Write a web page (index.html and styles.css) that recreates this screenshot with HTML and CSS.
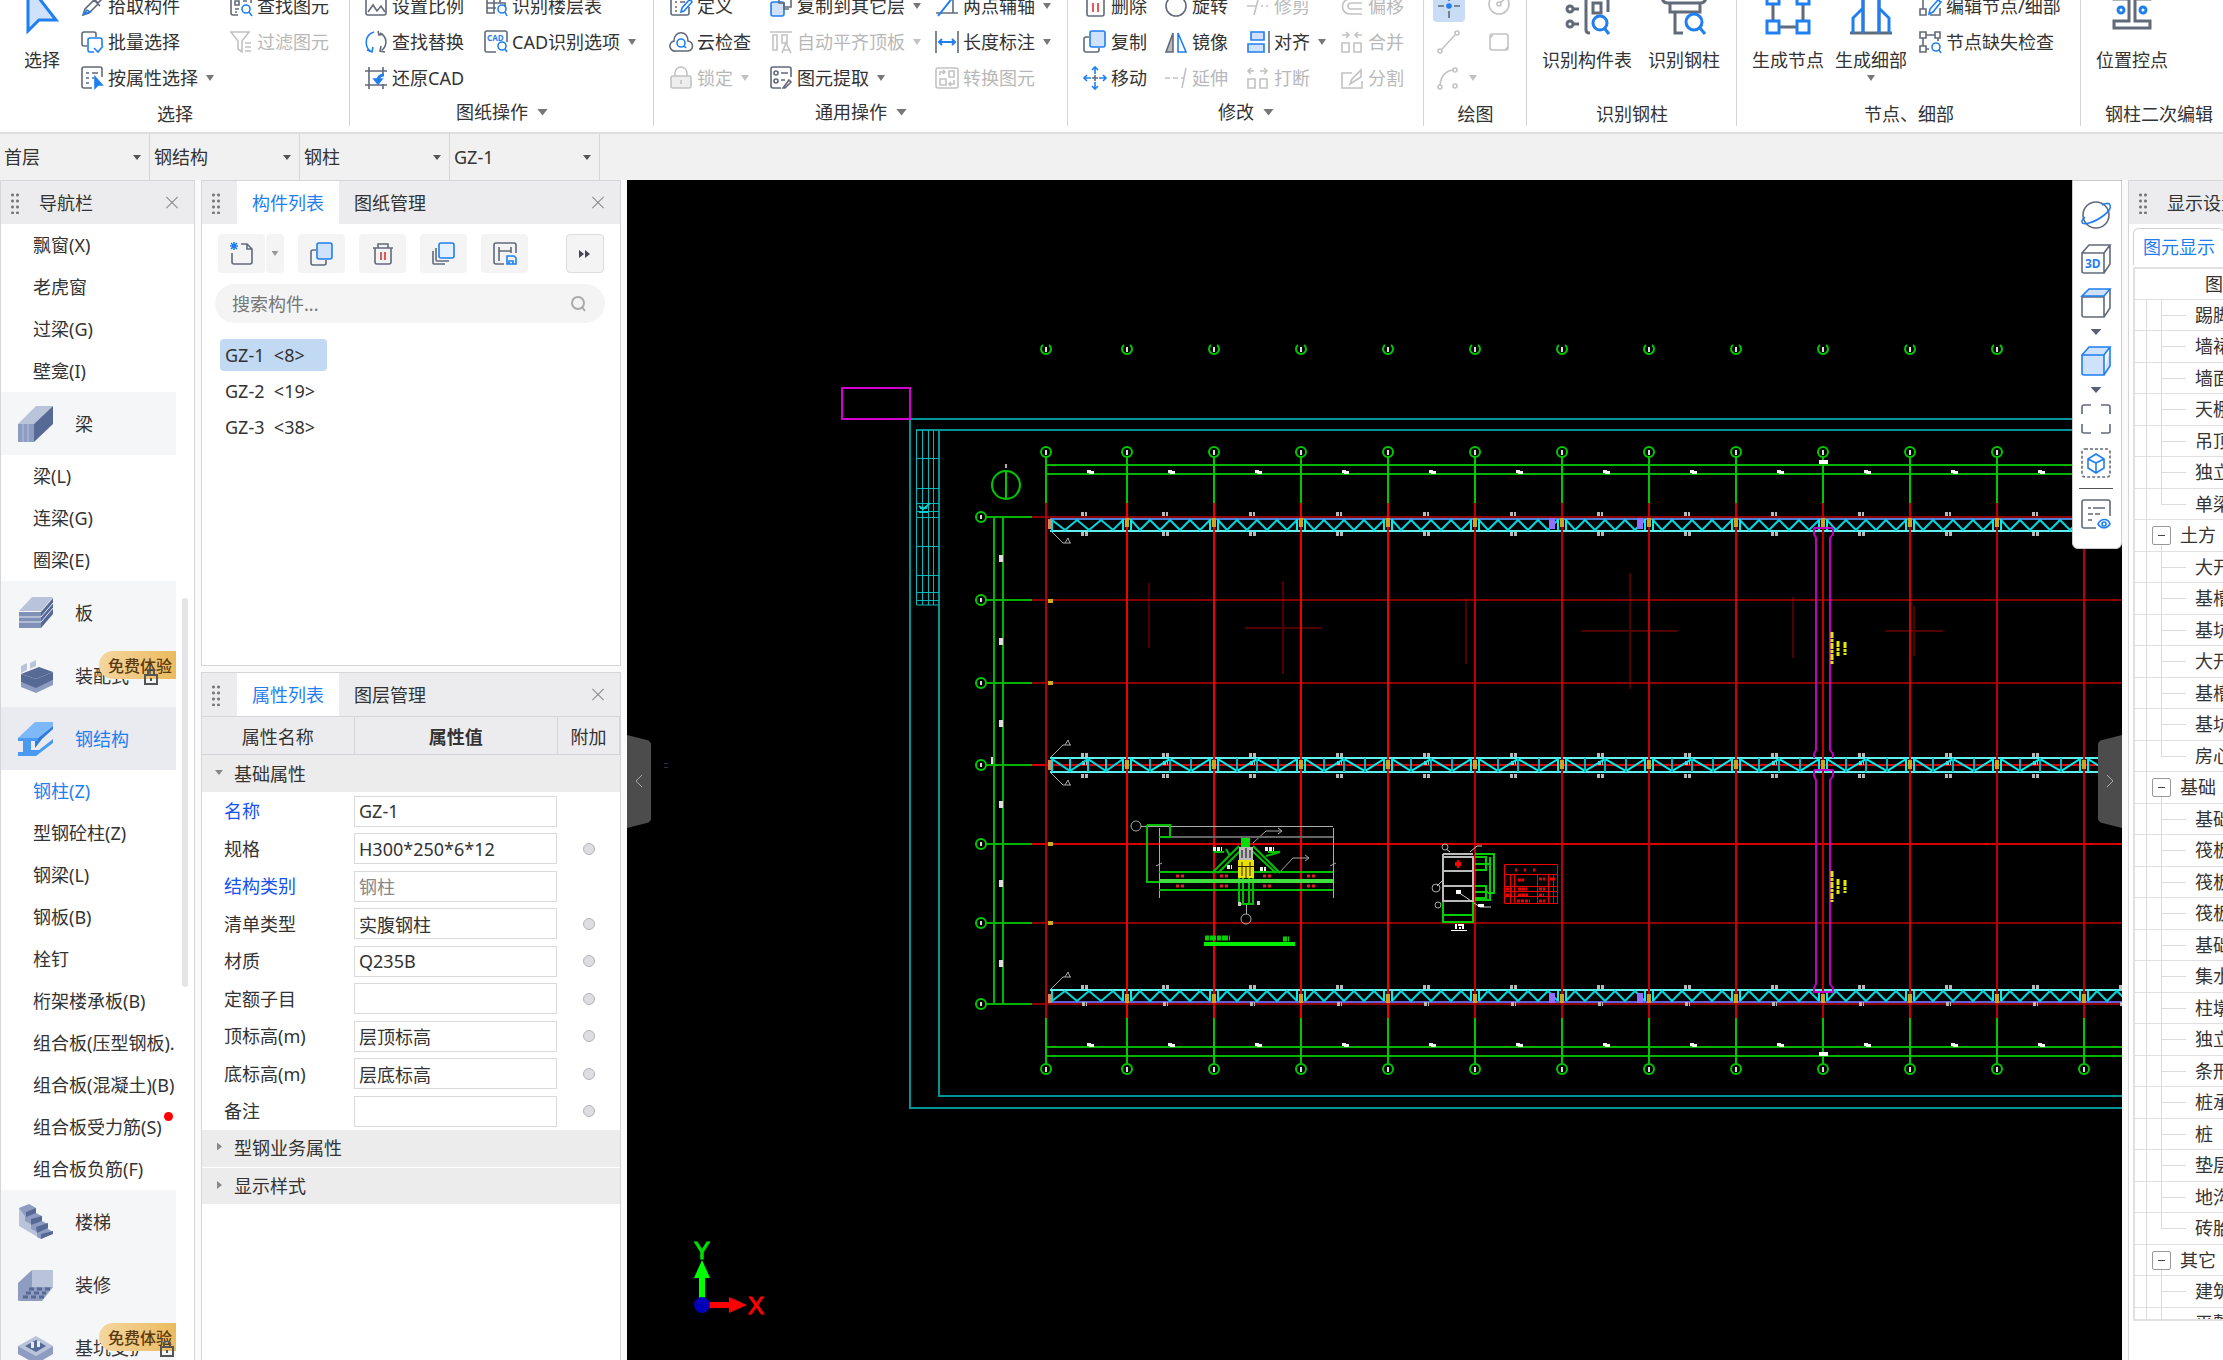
FILE: index.html
```html
<!DOCTYPE html>
<html lang="zh-CN">
<head>
<meta charset="utf-8">
<title>钢柱建模</title>
<link rel="stylesheet" href="styles.css">
</head>
<body>
<header class="ribbon">
  <section class="group group-select">
    <div class="tools">
      <button class="big"><svg class="ic big-ic" viewBox="0 0 44 44"><path class="b bf" stroke-width="3" d="M8 -6V41L19 30H36Z"/></svg><span>选择</span></button>
      <div class="col">
        <button class="cmd"><svg class="ic" viewBox="0 0 24 24"><path d="M3 21l2-6 9-9 4 4-9 9zM12 4l8 8M15 6l4-4 3 3-4 4z"/><path class="b" d="M4 20l3-4 3 2z"/></svg>拾取构件</button>
        <button class="cmd"><svg class="ic" viewBox="0 0 24 24"><path d="M7 16H4a2 2 0 0 1-2-2V4a2 2 0 0 1 2-2h10a2 2 0 0 1 2 2v3"/><path class="b" d="M14 22h-4a2 2 0 0 1-2-2v-10a2 2 0 0 1 2-2h10a2 2 0 0 1 2 2v6M14 18l4 4 5-6"/></svg>批量选择</button>
        <button class="cmd"><svg class="ic" viewBox="0 0 24 24"><path d="M12 22H4a2 2 0 0 1-2-2V3a2 2 0 0 1 2-2h16a2 2 0 0 1 2 2v8M6 7h3M12 7h6M6 12h3M12 12h2M6 17h3"/><path class="b solid" d="M15 11v11l3-3h4z"/></svg>按属性选择<i class="caret"></i></button>
      </div>
      <div class="col">
        <button class="cmd"><svg class="ic" viewBox="0 0 24 24"><path d="M9 21H4a2 2 0 0 1-2-2V3h20v6M6 7h4v4H6zM14 7h4M6 15h4M6 18h2"/><circle class="b" cx="17" cy="15" r="4"/><path class="b" d="M20 18l3 4"/></svg>查找图元</button>
        <button class="cmd" disabled><svg class="ic" viewBox="0 0 24 24"><path d="M2 2h18l-7 9v11l-4-3v-8zM16 13h6M16 17h6M16 21h6"/></svg>过滤图元</button>
      </div>
    </div>
    <h2>选择</h2>
  </section>
  <section class="group group-sheet">
    <div class="tools">
      <div class="col">
        <button class="cmd"><svg class="ic" viewBox="0 0 24 24"><rect x="2" y="2" width="20" height="19" rx="2"/><path d="M4 18l5-7 4 6 4-5 4 6"/></svg>设置比例</button>
        <button class="cmd"><svg class="ic" viewBox="0 0 24 24"><path class="b" d="M10 2C0 5 0 18 8 22M3 20l5 2 1-5"/><path d="M16 3c8 4 7 13 2 17M21 22l-5-1 1-5M14 1l1 4 4-1"/></svg>查找替换</button>
        <button class="cmd"><svg class="ic" viewBox="0 0 24 24"><path d="M5 1v22M19 1v8M1 5h22M1 19h22M19 18v5"/><path class="b" stroke-width="3" d="M20 9c-4 0-6 2-6 6"/><path class="b solid" d="M10 13h8l-4 5z"/></svg>还原CAD</button>
      </div>
      <div class="col">
        <button class="cmd"><svg class="ic" viewBox="0 0 24 24"><path d="M11 19H3V9h18v4M3 14h9M10 2v17M16 2v7M3 2v7"/><circle class="b" cx="18" cy="15" r="4"/><path class="b" d="M21 18l2 4"/></svg>识别楼层表</button>
        <button class="cmd"><svg class="ic" viewBox="0 0 24 24"><path d="M12 22H3a2 2 0 0 1-2-2V3a2 2 0 0 1 2-2h18a2 2 0 0 1 2 2v9"/><text class="cad" x="3" y="11">CAD</text><circle class="b" cx="18" cy="16" r="4"/><path class="b" d="M21 19l2 3"/></svg>CAD识别选项<i class="caret"></i></button>
      </div>
    </div>
    <h2>图纸操作<i class="caret"></i></h2>
  </section>
  <section class="group group-common">
    <div class="tools">
      <div class="col">
        <button class="cmd"><svg class="ic" viewBox="0 0 24 24"><path d="M20 13v6a2 2 0 0 1-2 2H4a2 2 0 0 1-2-2V4M6 8h2M11 8h5M6 13h2M6 17h2"/><path class="b" d="M12 18l1-4 8-9 2 3-8 9z"/></svg>定义</button>
        <button class="cmd"><svg class="ic" viewBox="0 0 24 24"><path d="M7 21a5 5 0 0 1-2-10c0-11 14-11 14 0a5 5 0 0 1-1 10z"/><circle class="b" cx="12" cy="13" r="4"/><path class="b" d="M15 16l2 2"/></svg>云检查</button>
        <button class="cmd" disabled><svg class="ic" viewBox="0 0 24 24"><rect x="2" y="10" width="20" height="12" rx="2" fill="#eee"/><path d="M6 10V7a6 6 0 0 1 12 0v3M12 14v4"/></svg>锁定<i class="caret"></i></button>
      </div>
      <div class="col">
        <button class="cmd"><svg class="ic" viewBox="0 0 24 24"><path d="M11 3V2h11v11h-6"/><rect class="b bf" x="2" y="8" width="13" height="14" rx="2"/><path d="M10 2v7h5v6h5"/></svg>复制到其它层<i class="caret"></i></button>
        <button class="cmd" disabled><svg class="ic" viewBox="0 0 24 24"><path d="M1 2h22M4 5h4v15H4zM13 5h5v8h-5zM13 23l4-10 5 10M14 20h6"/></svg>自动平齐顶板<i class="caret"></i></button>
        <button class="cmd"><svg class="ic" viewBox="0 0 24 24"><path d="M12 22H4a2 2 0 0 1-2-2V3a2 2 0 0 1 2-2h16a2 2 0 0 1 2 2v8M12 7h7M12 14h4M14 22l6-8 2 2-6 6z"/><circle cx="7" cy="7" r="2"/><circle cx="7" cy="15" r="2"/></svg>图元提取<i class="caret"></i></button>
      </div>
      <div class="col">
        <button class="cmd"><svg class="ic" viewBox="0 0 24 24"><path d="M1 19h22M18 1v18M5 1h17"/><path class="b" stroke-width="2" d="M3 22L19 2"/></svg>两点辅轴<i class="caret"></i></button>
        <button class="cmd"><svg class="ic" viewBox="0 0 24 24"><path d="M1 1v22M23 1v22"/><path class="b" stroke-width="2" d="M4 12h16M7 9l-3 3 3 3M17 9l3 3-3 3"/></svg>长度标注<i class="caret"></i></button>
        <button class="cmd" disabled><svg class="ic" viewBox="0 0 24 24"><rect x="1" y="2" width="22" height="20" rx="2"/><path d="M5 13h6v6H5zM14 5h5v6h-5zM5 9V6h5M8 4l2 2-2 2M19 14v4h-5M16 16l-2 2 2 2"/></svg>转换图元</button>
      </div>
    </div>
    <h2>通用操作<i class="caret"></i></h2>
  </section>
  <section class="group group-modify">
    <div class="tools">
      <div class="col">
        <button class="cmd"><svg class="ic" viewBox="0 0 24 24"><path d="M4 3v17a2 2 0 0 0 2 2h13a2 2 0 0 0 2-2V3"/><path class="r" d="M10 9v9M15 9v9"/></svg>删除</button>
        <button class="cmd"><svg class="ic" viewBox="0 0 24 24"><path d="M6 7H3a2 2 0 0 0-2 2v11a2 2 0 0 0 2 2h11a2 2 0 0 0 2-2v-2"/><rect class="b bf" x="7" y="1" width="15" height="16" rx="2"/></svg>复制</button>
        <button class="cmd"><svg class="ic" viewBox="0 0 24 24"><path class="b" d="M12 8V2M9 4l3-3 3 3M12 16v6M9 20l3 3 3-3M8 12H2M4 9l-3 3 3 3M16 12h6M20 9l3 3-3 3"/><path d="M12 9v6M9 12h6"/></svg>移动</button>
      </div>
      <div class="col">
        <button class="cmd"><svg class="ic" viewBox="0 0 24 24"><circle cx="12" cy="12" r="10"/></svg>旋转</button>
        <button class="cmd"><svg class="ic" viewBox="0 0 24 24"><path fill="#bbb" d="M2 22L9 3v19z"/><path class="b" d="M14 3v19h8z"/></svg>镜像</button>
        <button class="cmd" disabled><svg class="ic" viewBox="0 0 24 24"><path d="M1 12h5M9 12h5M22 2l-4 20M17 12h3"/></svg>延伸</button>
      </div>
      <div class="col">
        <button class="cmd" disabled><svg class="ic" viewBox="0 0 24 24"><path d="M1 12h9M13 2L8 21M15 12h2M20 12h2"/></svg>修剪</button>
        <button class="cmd"><svg class="ic" viewBox="0 0 24 24"><path class="b bf" d="M5 2h13v8H5zM2 14h16v8H2z"/><path d="M23 1v22"/></svg>对齐<i class="caret"></i></button>
        <button class="cmd" disabled><svg class="ic" viewBox="0 0 24 24"><path d="M2 13h7v9H2zM14 13h7v9h-7zM2 5h6M5 2L2 5l3 3M14 5h7M18 2l3 3-3 3"/></svg>打断</button>
      </div>
      <div class="col">
        <button class="cmd" disabled><svg class="ic" viewBox="0 0 24 24"><path d="M22 20H10C0 20 0 5 10 5h12M22 15H11c-4 0-4-6 0-6h11"/></svg>偏移</button>
        <button class="cmd" disabled><svg class="ic" viewBox="0 0 24 24"><path d="M2 13h7v9H2zM14 13h7v9h-7zM2 5h6M6 2l3 3-3 3M22 5h-7M18 2l-3 3 3 3"/></svg>合并</button>
        <button class="cmd" disabled><svg class="ic" viewBox="0 0 24 24"><path d="M12 7H2v15h20v-7M10 18l2-5 9-9v7z"/></svg>分割</button>
      </div>
    </div>
    <h2>修改<i class="caret"></i></h2>
  </section>
  <section class="group group-draw">
    <div class="tools">
      <div class="col">
        <button class="cmd" aria-label="点"><svg class="ic picked" viewBox="0 0 32 32"><path d="M5 16h6M21 16h6M16 5v6M16 21v7"/><circle class="b solid" cx="16" cy="16" r="2"/></svg></button>
        <button class="cmd inset" disabled aria-label="直线"><svg class="ic" viewBox="0 0 24 24"><circle cx="3" cy="21" r="2"/><circle cx="20" cy="3" r="2"/><path d="M5 19L18 5"/></svg></button>
        <button class="cmd inset" disabled aria-label="弧"><svg class="ic" viewBox="0 0 24 24"><circle cx="3" cy="21" r="2"/><circle cx="18" cy="20" r="2"/><circle cx="18" cy="4" r="2"/><path d="M3 19C4 10 8 5 16 4"/></svg><i class="caret"></i></button>
      </div>
      <div class="col">
        <button class="cmd" disabled aria-label="圆"><svg class="ic" viewBox="0 0 24 24"><circle cx="12" cy="10" r="10"/><circle cx="12" cy="10" r="2"/><path d="M13 9l6-5"/></svg></button>
        <button class="cmd" disabled aria-label="矩形"><svg class="ic" viewBox="0 0 24 24"><rect x="3" y="4" width="18" height="16" rx="2"/><path d="M3 8l3-3M18 20l3-3"/></svg></button>
      </div>
    </div>
    <h2>绘图</h2>
  </section>
  <section class="group group-detect">
    <div class="tools">
      <button class="big"><svg class="ic big-ic thick" viewBox="0 0 44 44"><circle cx="5" cy="19" r="3"/><circle cx="5" cy="34" r="3"/><path d="M8 19h6M8 34h6M21 -2v42q0 3 4 3M28 13h8v10h-8zM28 -2v12M43 -2v24"/><circle class="b" cx="35" cy="33" r="7"/><path class="b" d="M40 39l4 5"/></svg><span>识别构件表</span></button>
      <button class="big"><svg class="ic big-ic thick" viewBox="0 0 44 44"><path d="M0 8q1 5 6 5h32q5 0 6-5M8 13v9h30v-9M13 22v21h8M26 22h5"/><circle class="b" cx="32" cy="32" r="8"/><path class="b" d="M38 38l5 6"/></svg><span>识别钢柱</span></button>
    </div>
    <h2>识别钢柱</h2>
  </section>
  <section class="group group-node">
    <div class="tools">
      <button class="big"><svg class="ic big-ic thick" viewBox="0 0 44 44"><path d="M7 14v17M37 14v17M13 37h18"/><path class="b" d="M1 2h12v12H1zM31 2h12v12H31zM1 31h12v12H1zM31 31h12v12H31z"/></svg><span>生成节点</span></button>
      <button class="big"><svg class="ic big-ic thick" viewBox="0 0 44 44"><path d="M14 -2v44M30 -2v44M1 43h42"/><path class="b" d="M4 43V28l10-10v25M40 43V28L30 18v25M14 10v8M30 10v8"/></svg><span>生成细部</span><i class="caret"></i></button>
      <div class="col">
        <button class="cmd"><svg class="ic" viewBox="0 0 24 24"><path d="M5 2v13M2 15h6v6H2zM12 21h10v-7"/><path class="b" d="M11 20l1-5 8-9 3 2-8 10z"/></svg>编辑节点/细部</button>
        <button class="cmd"><svg class="ic" viewBox="0 0 24 24"><path d="M2 2h6v6H2zM17 2h5v6h-5zM2 16h6v6H2zM8 5h9M5 8v8M8 19h3M20 8v3"/><circle class="b" cx="18" cy="17" r="4"/><path class="b" d="M21 20l2 3"/></svg>节点缺失检查</button>
      </div>
    </div>
    <h2>节点、细部</h2>
  </section>
  <section class="group group-edit">
    <div class="tools">
      <button class="big"><svg class="ic big-ic thick" viewBox="0 0 44 44"><path d="M4 0v9h15v22H4v7h36v-7H25V9h15V0"/><circle class="b" cx="11" cy="20" r="3"/><circle class="b" cx="33" cy="20" r="3"/></svg><span>位置控点</span></button>
    </div>
    <h2>钢柱二次编辑</h2>
  </section>
</header>

<nav class="pickers">
  <label class="picker"><select aria-label="楼层"><option>首层</option></select></label>
  <label class="picker"><select aria-label="专业"><option>钢结构</option></select></label>
  <label class="picker"><select aria-label="构件类型"><option>钢柱</option></select></label>
  <label class="picker"><select aria-label="构件"><option>GZ-1</option></select></label>
</nav>

<main class="work">
  <aside class="panel nav-panel">
    <div class="panel-head"><i class="grip"></i><h3>导航栏</h3><button class="close" aria-label="关闭导航栏"></button></div>
    <div class="nav-body">
      <ul class="nav-list">
        <li><a href="#">飘窗(X)</a></li>
        <li><a href="#">老虎窗</a></li>
        <li><a href="#">过梁(G)</a></li>
        <li><a href="#">壁龛(I)</a></li>
        <li class="cat"><a href="#"><svg viewBox="0 0 36 36"><path fill="#b9c3da" d="M0 18L18 0h17L16 18z"/><path fill="#8d9cc0" d="M0 18h16v18H0z"/><path fill="#566a95" d="M16 18L35 0v18L16 36z"/><path stroke="#b9c3da" d="M5 18v18M10 18v18"/></svg>梁</a></li>
        <li><a href="#">梁(L)</a></li>
        <li><a href="#">连梁(G)</a></li>
        <li><a href="#">圈梁(E)</a></li>
        <li class="cat"><a href="#"><svg viewBox="0 0 36 36"><path fill="#b9c3da" d="M1 16L14 2h21L23 16z"/><path fill="#8091b8" d="M1 17h22v16H1z"/><path fill="#566a95" d="M23 17L35 3v16L23 33z"/><path fill="none" stroke="#e4e9f3" d="M1 22h22L35 8M1 27h22L35 13"/></svg>板</a></li>
        <li class="cat"><a href="#"><svg viewBox="0 0 36 36"><path fill="#566a95" d="M3 16l15 5 17-7-14-5z"/><path fill="#8d9cc0" d="M3 24v5l15 6 17-8v-5l-17 7z"/><path fill="#566a95" d="M3 16v8l15 6 17-8v-8l-17 7z"/><path fill="#b9c3da" d="M3 8l6-3v7l-6 3zM12 5l6-3v6l-6 3z"/></svg>装配式</a><svg class="lock" viewBox="0 0 14 16"><path d="M1 6h12v9H1zM4 6V3a3 3 0 0 1 6 0v3M7 9v3"/></svg><em class="trial">免费体验</em></li>
        <li class="cat current"><a href="#"><svg viewBox="0 0 36 36"><path fill="#7db8f8" d="M0 17L17 1h18v4L20 17z"/><path fill="#2f7be0" d="M20 17L35 5v3L24 18l-7 9v-7z"/><path fill="#4a9af2" d="M0 17h20v3H13v9h8l14-11v4L18 35H0v-4h5V20H0z"/></svg>钢结构</a></li>
        <li class="current"><a href="#">钢柱(Z)</a></li>
        <li><a href="#">型钢砼柱(Z)</a></li>
        <li><a href="#">钢梁(L)</a></li>
        <li><a href="#">钢板(B)</a></li>
        <li><a href="#">栓钉</a></li>
        <li><a href="#">桁架楼承板(B)</a></li>
        <li><a href="#">组合板(压型钢板).</a></li>
        <li><a href="#">组合板(混凝土)(B)</a></li>
        <li><a href="#">组合板受力筋(S)</a><i class="dot"></i></li>
        <li><a href="#">组合板负筋(F)</a></li>
        <li class="cat"><a href="#"><svg viewBox="0 0 36 36"><path fill="#b9c3da" d="M1 4v18l22 13V24z"/><path fill="#8d9cc0" d="M1 4l10-4 7 4v5l6 3v5l6 3v5l5 3-12 7-4-2v-5l-6-3v-5l-6-3v-5z"/><path fill="#566a95" d="M8 8l10-4v5l-10 4zM13 15l11-3v5l-11 4zM18 23l12-4v5l-11 5zM23 30l12-3v3l-12 5z"/></svg>楼梯</a></li>
        <li class="cat"><a href="#"><svg viewBox="0 0 36 36"><path fill="#8d9cc0" d="M0 16L14 3v17L0 34z"/><path fill="#b9c3da" d="M14 3h21v17H14z"/><path fill="#8d9cc0" d="M0 34L12 20h23L24 34z"/><path stroke="#566a95" stroke-width="3" stroke-dasharray="5 3" d="M11 22h22M8 26h20M5 30h21"/></svg>装修</a></li>
        <li class="cat"><a href="#"><svg viewBox="0 0 36 36"><path fill="#b9c3da" d="M0 16L18 6l17 10-17 10z"/><path fill="#8d9cc0" d="M0 16v8l18 10 17-10v-8L18 26z"/><path fill="#566a95" d="M7 16l11-6 10 6-10 6z"/><path fill="#e4e9f3" d="M13 12h3v6h-3zM19 11h3v6h-3z"/></svg>基坑支护</a><svg class="lock far" viewBox="0 0 14 16"><path d="M1 6h12v9H1zM4 6V3a3 3 0 0 1 6 0v3M7 9v3"/></svg><em class="trial">免费体验</em></li>
      </ul>
      <i class="thumb"></i>
    </div>
  </aside>

  <div class="left-stack">
    <section class="panel list-panel">
      <div class="panel-head"><i class="grip"></i><button class="tab active">构件列表</button><button class="tab">图纸管理</button><button class="close" aria-label="关闭构件列表"></button></div>
      <div class="toolbar">
        <div class="split"><button aria-label="新建"><svg class="ic" viewBox="0 0 24 24"><path d="M11 2h6l5 5v13a2 2 0 0 1-2 2H4a2 2 0 0 1-2-2V11M17 2v5h5"/><path class="b" d="M1 1l6 6M7 1L1 7M4 0v8M0 4h8"/></svg></button><button class="drop" aria-label="新建选项"><i class="caret"></i></button></div>
        <button aria-label="复制"><svg class="ic" viewBox="0 0 24 24"><path d="M6 8H3a2 2 0 0 0-2 2v11a2 2 0 0 0 2 2h11a2 2 0 0 0 2-2v-3"/><rect class="b bf" x="7" y="1" width="15" height="16" rx="2"/></svg></button>
        <button aria-label="删除"><svg class="ic" viewBox="0 0 24 24"><path d="M2 6h20M7 6V2h10v4M4 6v14a2 2 0 0 0 2 2h12a2 2 0 0 0 2-2V6"/><path class="r" d="M10 10v8M14 10v8"/></svg></button>
        <button aria-label="层间复制"><svg class="ic" viewBox="0 0 24 24"><rect class="b pale" x="7" y="1" width="15" height="15" rx="2"/><path d="M4 6v12a1 1 0 0 0 1 1h12M1 9v12a1 1 0 0 0 1 1h11"/></svg></button>
        <button aria-label="构件存档"><svg class="ic" viewBox="0 0 24 24"><path d="M11 22H3a2 2 0 0 1-2-2V3a2 2 0 0 1 2-2h18a2 2 0 0 1 2 2v8M6 5v14M6 9h12M18 5v6"/><path class="b" d="M14 14h7l2 2v6h-9zM16 22v-3h4v3"/></svg></button>
        <button class="more" aria-label="更多"><svg viewBox="0 0 12 10"><path d="M0 1l5 4-5 4zM6 1l5 4-5 4z"/></svg></button>
      </div>
      <label class="search"><input type="text" placeholder="搜索构件..." aria-label="搜索构件"><svg viewBox="0 0 16 16"><circle cx="7" cy="7" r="6"/><path d="M11 11l3 4"/></svg></label>
      <ul class="parts">
        <li><button class="active">GZ-1&nbsp; &lt;8&gt;</button></li>
        <li><button>GZ-2&nbsp; &lt;19&gt;</button></li>
        <li><button>GZ-3&nbsp; &lt;38&gt;</button></li>
      </ul>
    </section>

    <section class="panel prop-panel">
      <div class="panel-head"><i class="grip"></i><button class="tab active">属性列表</button><button class="tab">图层管理</button><button class="close" aria-label="关闭属性列表"></button></div>
      <table class="props">
        <thead><tr><th>属性名称</th><th class="strong">属性值</th><th>附加</th></tr></thead>
        <tbody>
          <tr class="fold open"><td colspan="3">基础属性</td></tr>
          <tr><td class="key"><label for="p1">名称</label></td><td><input id="p1" type="text" value="GZ-1"></td><td></td></tr>
          <tr><td><label for="p2">规格</label></td><td><input id="p2" type="text" value="H300*250*6*12"></td><td><input type="checkbox" aria-label="附加规格"></td></tr>
          <tr><td class="key"><label for="p3">结构类别</label></td><td><input id="p3" type="text" value="钢柱" disabled></td><td></td></tr>
          <tr><td><label for="p4">清单类型</label></td><td><input id="p4" type="text" value="实腹钢柱"></td><td><input type="checkbox" aria-label="附加清单类型"></td></tr>
          <tr><td><label for="p5">材质</label></td><td><input id="p5" type="text" value="Q235B"></td><td><input type="checkbox" aria-label="附加材质"></td></tr>
          <tr><td><label for="p6">定额子目</label></td><td><input id="p6" type="text" value=""></td><td><input type="checkbox" aria-label="附加定额子目"></td></tr>
          <tr><td><label for="p7">顶标高(m)</label></td><td><input id="p7" type="text" value="层顶标高"></td><td><input type="checkbox" aria-label="附加顶标高"></td></tr>
          <tr><td><label for="p8">底标高(m)</label></td><td><input id="p8" type="text" value="层底标高"></td><td><input type="checkbox" aria-label="附加底标高"></td></tr>
          <tr><td><label for="p9">备注</label></td><td><input id="p9" type="text" value=""></td><td><input type="checkbox" aria-label="附加备注"></td></tr>
          <tr class="fold"><td colspan="3">型钢业务属性</td></tr>
          <tr class="fold"><td colspan="3">显示样式</td></tr>
        </tbody>
      </table>
    </section>
  </div>

  <section class="canvas" aria-label="绘图区">
    <svg class="drawing">
      <defs>
        <g id="marks">
          <path stroke="#b8b8b8" stroke-width="4" stroke-dasharray="3 1" d="M35 514H41M35 755H42M36 763H41M35 987H42M36 1004H41"/>
          <path stroke="#b8b8b8" stroke-width="4" stroke-dasharray="3 1" d="M35 534H43M35 776H43"/>
          <path fill="#f4f4f4" d="M41 470h4v1h3v3h-5v-1h-2zM41 1043h4v1h3v3h-5v-1h-2z"/>
        </g>
        <g id="axis">
          <path stroke="currentColor" stroke-width="2" d="M0 503V1018"/>
          <path stroke="#00c800" stroke-width="2" d="M0 457V503M0 1018V1064"/>
          <g stroke="#00c800" stroke-width="2" fill="none"><circle cy="452" r="5"/><circle cy="1069" r="5"/><path d="M-3 345a5 5 0 1 0 6 0"/></g>
          <path fill="#ddd" d="M-1 347h2v5h-2zM-1 450h2v5h-2zM-1 1067h2v5h-2z"/>
        </g>
        <g id="posts" fill="none">
          <path stroke="#00f0f0" stroke-width="2" d="M-4 519V530M4 519V530M-4 758V772M4 758V772M-4 991V1001M4 991V1001"/>
          <path fill="#d8a020" d="M-2 518h4v9h-4zM-2 760h4v9h-4zM-2 994h4v9h-4z"/>
        </g>
        <g id="bay" fill="none">
          <use href="#axis"/><use href="#marks"/>
          <path stroke="#00d8e0" stroke-width="2" d="M4 520L13 530 23 520 33 530 43 520 53 530 63 520 73 530 83 520M4 1001L13 991 23 1001 33 991 43 1001 53 991 63 1001 73 991 83 1001"/>
          <path stroke="#00f0f0" stroke-width="2" d="M4 759L23 771 43 759 64 771 83 759"/>
          <path stroke="#00b8c0" stroke-width="2" d="M23 758V772M43 758V772M64 758V772"/>
          <use href="#posts"/>
        </g>
      </defs>
      <g transform="translate(-627 -180)" fill="none">
        <path stroke="#009494" stroke-width="2" d="M2130 419H910V1108H2130M2130 430H916M939 430V1096H2130"/>
        <rect x="842" y="388" width="68" height="31" stroke="#d400d4" stroke-width="2"/>
        <path stroke="#00b8b8" d="M916.500 430V605H939M922.500 430V605M928.500 430V605M933.500 430V605M916 458.500H939M916 488.500H939M916 503.500H939M916 511.500H939M916 517.500H939M916 546.500H939M916 575.500H939M916 592.500H939M916 600.500H939"/>
        <path stroke="#00d0d0" stroke-width="2" d="M919 506l4 3 4-3 3-3M919 512h9M920 508h7"/>
        <circle cx="1006" cy="485" r="14" stroke="#00c800" stroke-width="2"/><path stroke="#00c800" stroke-width="2" d="M1006 471V499"/><path fill="#aaa" d="M1005 464h2v4h-2z"/>

        <path stroke="#500000" stroke-width="2" d="M1149 583V648M1283 581V674M1245 628H1322M1466 598V664M1630 573V689M1581 631H1678M1793 597V658M1914 606V656M1885 631H1943"/>
        <path stroke="#8c0000" stroke-width="2" d="M1032 517H2130M1032 600H2130M1032 683H2130M1032 923H2130M1032 1004H2130"/>
        <path stroke="#d80000" stroke-width="2" d="M1032 765H2130M1032 844H2130"/>
        <path stroke="#00b400" stroke-width="2" d="M994 516V1004M1003 516V1004M986 517H1032M986 600H1032M986 683H1032M986 765H1032M986 844H1032M986 923H1032M986 1004H1032M1046 465H2130M1046 474H2130M1046 1047H2130M1046 1056H2130"/>
        <g stroke="#00c800" stroke-width="2"><circle cx="981" cy="517" r="5"/><circle cx="981" cy="600" r="5"/><circle cx="981" cy="683" r="5"/><circle cx="981" cy="765" r="5"/><circle cx="981" cy="844" r="5"/><circle cx="981" cy="923" r="5"/><circle cx="981" cy="1004" r="5"/></g>
        <path fill="#ddd" d="M980 515h2v4h-2zM980 598h2v4h-2zM980 681h2v4h-2zM980 763h2v4h-2zM980 842h2v4h-2zM980 921h2v4h-2zM980 1002h2v4h-2zM999 555h4v7h-4zM999 638h4v7h-4zM999 720h4v7h-4zM999 801h4v7h-4zM999 880h4v7h-4zM999 960h4v7h-4zM991 757h2v7h-2z"/>

        <path stroke="#4c80d8" stroke-width="2" d="M1050 519H2130"/><path stroke="#6060e0" stroke-width="2" d="M1050 1002H2130"/>
        <path stroke="#60f0f0" stroke-width="2" d="M1050 531H2130M1050 758H2130M1050 772H2130M1050 990H2130"/>
        <use href="#axis" x="1046" color="#b00000"/><use href="#marks" x="1046"/>
        <path stroke="#00d8e0" stroke-width="2" d="M1052 519V531L1052 520 1065 530 1077 520 1089 530 1101 520 1113 530 1123 520M1052 991V1001L1065 991 1077 1001 1089 991 1101 1001 1113 991 1123 1001M1052 758V772M1052 759L1070 771 1088 759 1106 771 1123 759M1070 758V772M1088 758V772M1106 758V772"/>
        <path fill="#c89060" d="M1048 519h4v10h-4zM1048 760h4v10h-4zM1048 994h4v9h-4z"/>
        <use href="#bay" x="1127" color="#f00000"/><use href="#bay" x="1214" color="#f00000"/><use href="#bay" x="1301" color="#f00000"/><use href="#bay" x="1388" color="#f00000"/>
        <use href="#bay" x="1475" color="#c00000"/><use href="#bay" x="1562" color="#c00000"/><use href="#bay" x="1649" color="#c00000"/><use href="#bay" x="1736" color="#d00000"/><use href="#bay" x="1823" color="#c00000"/><use href="#bay" x="1910" color="#d00000"/><use href="#bay" x="1997" color="#c00000"/><use href="#bay" x="2084" color="#c00000"/>
        <path fill="#9070ff" d="M1549 518h6v11h-6zM1637 518h6v11h-6zM1549 993h6v10h-6zM1637 993h6v10h-6z"/>
        <path fill="#fff" d="M1819 460h9v4h-9zM1819 1052h9v4h-9z"/>
        <path fill="#c8b020" d="M1048 599h5v4h-5zM1048 681h5v4h-5zM1048 842h5v4h-5zM1048 921h5v4h-5z"/>
        <path stroke="#aaa" d="M1051 531L1063 543H1071M1051 757L1063 745H1071M1051 773L1063 785H1071M1051 989L1063 977H1071M1065 543l3-5 2 5M1065 745l3-5 2 5M1065 785l3-5 2 5M1065 977l3-5 2 5"/>

        <path stroke="#c000c0" stroke-width="2" d="M1814 528H1833M1814 528V534L1816 538V750L1814 754V758M1833 528V534L1830 538V750L1833 754V758M1814 770H1833M1814 770V776L1816 780V984L1814 988V992H1833V988L1830 984V780L1833 776V770"/>
        <path stroke="#e8e800" stroke-width="3" stroke-dasharray="6 1 3 1" d="M1832 632V665M1838 641V656M1845 642V655M1832 871V902M1838 879V894M1845 880V893"/>

        <g stroke="#aaa"><circle cx="1136" cy="826" r="5"/><circle cx="1246" cy="919" r="5"/><path d="M1141 826.500H1333M1159.500 828V898M1333.500 828V898M1246.500 904V914M1253 843L1266 831H1282M1279 873L1293 858H1309M1278 828l4 3-4 3M1305 855l4 3-4 3M1156 866l6-3M1330 866l6-3"/><path stroke="#666" stroke-width="2" d="M1159 837H1333"/></g>
        <path stroke="#00c000" stroke-width="2" d="M1147 825V882H1159M1147 825H1170V837H1159M1159 872H1333M1159 890H1333M1239 846L1212 873M1243 848L1218 873M1253 846L1280 873M1249 848L1276 873M1239 877V904M1243 877V904M1249 877V904M1253 877V904H1239M1226 849L1230 856M1214 852H1224M1268 852H1280L1266 856"/>
        <path stroke="#40e040" stroke-width="4" d="M1159 881H1333"/>
        <path fill="#00e000" d="M1241 838h9v9h-9z"/><path fill="#bbb" d="M1239 847h14v13h-14z"/><path stroke="#000" d="M1242 850v8M1250 850v8M1246 848v10"/>
        <path fill="#e8e000" d="M1238 860h16v18h-16z"/><path stroke="#302000" d="M1238 866.500h16M1242 862v14M1250 862v14M1246 866v12"/>
        <path stroke="#eee" stroke-width="4" stroke-dasharray="3 1" d="M1213 849H1222M1265 849H1274M1227 867H1232M1260 869H1266"/><path fill="#ccc" d="M1238 902h3v4h-3zM1257 901h3v4h-3z"/>
        <path stroke="#e02020" stroke-width="3" stroke-dasharray="3 2" d="M1176 876H1184M1220 876H1228M1263 876H1271M1307 876H1315M1176 886H1184M1220 886H1228M1263 886H1271M1307 886H1315"/>
        <path stroke="#00f000" stroke-width="4" d="M1204 944H1295"/><path stroke="#00d000" stroke-width="5" stroke-dasharray="4 1 6 1" d="M1205 938H1230M1283 939H1289"/>

        <path stroke="#bbb" stroke-width="2" d="M1443 854H1473M1443 857H1473V901H1443V854M1443 871H1473M1443 886H1473M1443 901H1473"/><path stroke="#ccc" d="M1458 892L1480 907H1491M1450 852L1446 849M1470 852L1477 846H1482M1443 880L1437 886"/>
        <g stroke="#aaa"><circle cx="1445" cy="847" r="3"/><circle cx="1436" cy="888" r="4"/><circle cx="1438" cy="905" r="3"/></g>
        <path fill="#fff" d="M1456 890h5v4h-5zM1455 924h2v5h-2zM1458 924h5v2h-5zM1462 924h2v5h-2zM1459 927h2v2h-2zM1451 930h16v1h-16zM1478 904h6v3h-6z"/>
        <path fill="#f00" d="M1455 862h6v4h-6zM1457 860h2v8h-2z"/>
        <path stroke="#00d000" stroke-width="2" d="M1443 902V922H1473V902M1443 915H1473M1475 854H1494V893H1488M1475 857H1486V870H1475M1475 864H1490M1490 857V900H1475M1475 886H1486V898H1475M1475 892H1488"/>

        <path stroke="#f00000" d="M1504.500 864.500H1557.500V903.500H1504.500zM1504 874.500H1557M1504 886.500H1557M1504 891.500H1557M1504 896.500H1557M1510.500 874V903M1514.500 874V903M1537.500 874V903M1548.500 874V903M1553.500 874V903"/>
        <path stroke="#f00000" stroke-width="3" stroke-dasharray="2 7" d="M1515 870H1535"/><path stroke="#f00000" stroke-width="3" stroke-dasharray="3 1" d="M1506 889H1512M1518 889H1527M1539 889H1545M1506 895H1512M1518 895H1528M1539 895H1544M1517 901H1530M1539 901H1545M1518 880H1524M1539 879H1545M1550 879H1555"/>
        <path stroke="#402050" d="M664 763.500h4M664 767.500h4"/>

        <path fill="#00ff00" d="M694 1278L702 1260 710 1278H705V1298H699V1278z"/><path fill="#f00" d="M708 1302H729V1297L747 1305 729 1313V1308H708z"/><circle cx="702" cy="1305" r="8" fill="#0000b8"/>
        <text class="axis-name" x="694" y="1259" fill="#00e000" stroke="#00e000">Y</text><text class="axis-name" x="748" y="1314" fill="#f00" stroke="#f00">X</text>
      </g>
    </svg>
    <button class="handle left" aria-label="收起左侧"><svg viewBox="0 0 10 16"><path d="M8 2L2 8l6 6"/></svg></button>
    <button class="handle right" aria-label="收起右侧"><svg viewBox="0 0 10 16"><path d="M2 2l6 6-6 6"/></svg></button>
    <div class="view-tools">
      <button aria-label="动态观察"><svg class="ic" viewBox="0 0 30 30"><circle cx="15" cy="15" r="13"/><path class="b" d="M4 17C-1 22 0 25 8 23S32 11 29 5C28 2 23 4 21 5"/></svg></button>
      <button aria-label="三维"><svg class="ic" viewBox="0 0 30 30"><path d="M1 9h22v20H3a2 2 0 0 1-2-2zM1 9l7-8h21l-6 8M29 1v19l-6 9"/><text class="cube-name" x="4" y="24">3D</text></svg></button>
      <button aria-label="俯视"><svg class="ic" viewBox="0 0 30 30"><path d="M1 9h22v20H3a2 2 0 0 1-2-2zM29 1v19l-6 9"/><path class="b bf" d="M1 8l7-7h21l-6 7z"/></svg></button>
      <i class="caret"></i>
      <button aria-label="着色"><svg class="ic" viewBox="0 0 30 30"><path class="b bf" d="M1 9h22v20H3a2 2 0 0 1-2-2zM1 9l7-8h21l-6 8M29 1v19l-6 9"/></svg></button>
      <i class="caret"></i>
      <button aria-label="全屏"><svg class="ic" viewBox="0 0 30 30"><path d="M1 10V3a2 2 0 0 1 2-2h7M20 1h7a2 2 0 0 1 2 2v7M29 20v7a2 2 0 0 1-2 2h-7M10 29H3a2 2 0 0 1-2-2v-7"/></svg></button>
      <button aria-label="局部三维"><svg class="ic" viewBox="0 0 30 30"><rect x="1" y="1" width="28" height="28" rx="3" stroke-dasharray="3 2"/><path class="b" d="M15 6l8 5v9l-8 5-8-5v-9zM7 11l8 4 8-4M15 15v10"/></svg></button>
      <hr>
      <button aria-label="显示设置"><svg class="ic" viewBox="0 0 30 30"><path d="M15 29H3a2 2 0 0 1-2-2V3a2 2 0 0 1 2-2h24a2 2 0 0 1 2 2v14M7 9h3M12 9h12M7 15h5M14 15h5M7 21h4"/><path class="b" d="M17 25c3-6 10-6 12 0-3 5-9 5-12 0z"/><circle class="b" cx="23" cy="25" r="2"/></svg></button>
    </div>
  </section>

  <aside class="panel display-panel">
    <div class="panel-head"><i class="grip"></i><h3>显示设置</h3></div>
    <div class="display-tabs"><button class="sheet-tab">图元显示</button></div>
    <div class="tree-wrap">
      <table class="tree">
        <thead><tr><th>图层</th></tr></thead>
        <tbody>
          <tr><td>踢脚</td></tr><tr><td>墙裙</td></tr><tr><td>墙面</td></tr><tr><td>天棚</td></tr><tr><td>吊顶</td></tr><tr><td>独立柱装修</td></tr><tr class="end"><td>单梁装修</td></tr>
          <tr class="branch"><td><button aria-label="折叠土方"></button>土方</td></tr>
          <tr><td>大开挖土方</td></tr><tr><td>基槽土方</td></tr><tr><td>基坑土方</td></tr><tr><td>大开挖灰土回填</td></tr><tr><td>基槽灰土回填</td></tr><tr><td>基坑灰土回填</td></tr><tr class="end"><td>房心回填</td></tr>
          <tr class="branch"><td><button aria-label="折叠基础"></button>基础</td></tr>
          <tr><td>基础梁</td></tr><tr><td>筏板基础</td></tr><tr><td>筏板主筋</td></tr><tr><td>筏板负筋</td></tr><tr><td>基础板带</td></tr><tr><td>集水坑</td></tr><tr><td>柱墩</td></tr><tr><td>独立基础</td></tr><tr><td>条形基础</td></tr><tr><td>桩承台</td></tr><tr><td>桩</td></tr><tr><td>垫层</td></tr><tr><td>地沟</td></tr><tr class="end"><td>砖胎膜</td></tr>
          <tr class="branch"><td><button aria-label="折叠其它"></button>其它</td></tr>
          <tr><td>建筑面积</td></tr><tr><td>平整场地</td></tr>
        </tbody>
      </table>
    </div>
  </aside>
</main>
</body>
</html>
```

FILE: styles.css
```css
:root {
  --ink: #333;
  --blue: #1f7ff0;
  --line: #d6d6d8;
  --head: #ececee;
  --muted: #b8b8b8;
}

* { box-sizing: border-box; }

body {
  margin: 0;
  height: 100vh;
  display: flex;
  flex-direction: column;
  overflow: hidden;
  background: #fff;
  color: var(--ink);
  font: 18px/24px "Noto Sans", "Noto Sans CJK SC", sans-serif;
}

button, input, select { font: inherit; color: inherit; }
button { padding: 0; border: 0; background: none; white-space: nowrap; }
h2, h3 { margin: 0; font-size: 18px; font-weight: 400; }
ul { margin: 0; padding: 0; list-style: none; }
a { color: inherit; text-decoration: none; }

.caret {
  flex: none;
  width: 8px;
  height: 6px;
  background: #777;
  clip-path: polygon(0 0, 100% 0, 50% 100%);
}

/* line icons */
.ic { flex: none; width: 24px; height: 24px; fill: none; stroke: #626a7a; stroke-width: 1.6; overflow: visible; }
.ic .b { stroke: var(--blue); }
.ic .bf { fill: #cfe1fb; }
.ic .pale { fill: #e6f1ff; }
.ic .r { stroke: #e0312f; }
.ic .solid { fill: var(--blue); }
.ic text { stroke: none; fill: var(--blue); font-weight: 700; }
.cad { font-size: 8px; }
.cube-name { font-size: 12px; }

/* ribbon */
.ribbon {
  flex: none;
  display: flex;
  height: 134px;
  overflow: hidden;
  border-bottom: 2px solid #dedede;
}
.group {
  flex: none;
  position: relative;
  display: flex;
  flex-direction: column;
  justify-content: flex-end;
}
.group::after {
  content: "";
  position: absolute;
  right: 0;
  top: 0;
  bottom: 6px;
  width: 1px;
  background: #d4d4d4;
}
.group h2 {
  display: flex;
  flex: none;
  align-items: center;
  justify-content: center;
  gap: 9px;
  height: 36px;
  white-space: nowrap;
}
.group h2:has(.caret) { padding-bottom: 4px; }
.group h2 .caret { width: 11px; height: 7px; }
.tools { display: grid; flex: none; height: 108px; }
.group-select { width: 350px; }
.group-select .tools { padding-left: 16px; grid-template-columns: 64px 149px 1fr; }
.group-sheet { width: 304px; }
.group-sheet .tools { padding-left: 14px; grid-template-columns: 120px 1fr; }
.group-common { width: 414px; }
.group-common .tools { padding-left: 15px; grid-template-columns: 100px 166px 1fr; }
.group-modify { width: 356px; }
.group-modify .tools { padding-left: 15px; grid-template-columns: 81px 82px 94px 1fr; }
.group-draw { width: 103px; }
.group-draw .tools { padding-left: 9px; grid-template-columns: 54px 1fr; }
.group-detect { width: 210px; }
.group-detect .tools { padding-left: 15px; grid-template-columns: 90px 72px; column-gap: 16px; }
.group-node { width: 344px; }
.group-node .tools { padding-left: 15px; grid-template-columns: 72px 94px 1fr; }
.group-edit { width: 156px; }
.group-edit .tools { padding-left: 15px; grid-template-columns: 72px; }

.col { display: grid; grid-template-rows: repeat(3, 36px); }
.cmd { display: flex; align-items: center; gap: 4px; text-align: left; }
.cmd .caret { margin-left: 4px; }
.cmd:disabled { color: var(--muted); }
.cmd:disabled .ic { stroke: #c2c2c2; }
.cmd:disabled .caret { background: #c2c2c2; }
.inset { padding-left: 4px; }
.picked { width: 32px; height: 32px; background: #c8dcf5; border-radius: 4px; }
.big {
  display: flex;
  flex-direction: column;
  align-items: center;
  justify-content: flex-start;
  padding-top: 2px;
}
.group-select .big { width: 52px; }
.big-ic { width: 44px; height: 44px; margin-bottom: 14px; }
.big .caret { margin-top: 3px; }
.thick { stroke-width: 3; }

/* drop-down strip */
.pickers { flex: none; display: flex; height: 46px; background: #f1f1f1; }
.picker { position: relative; width: 150px; border-right: 1px solid var(--line); }
.picker::after {
  content: "";
  position: absolute;
  right: 8px;
  top: 21px;
  width: 8px;
  height: 5px;
  background: #555;
  clip-path: polygon(0 0, 100% 0, 50% 100%);
}
.picker select { width: 100%; height: 100%; padding: 0 20px 0 4px; border: 0; background: none; appearance: none; }

/* work area */
.work { flex: 1; min-height: 0; display: flex; gap: 6px; background: #fafafa; }
.panel { border: 1px solid var(--line); background: #fff; }
.panel-head { position: relative; display: flex; align-items: stretch; height: 43px; padding-left: 35px; background: var(--head); }
.panel-head h3 { align-self: center; padding-left: 3px; white-space: nowrap; }
.grip {
  position: absolute;
  left: 9px;
  top: 11px;
  width: 10px;
  height: 22px;
  background: radial-gradient(circle, #777 1px, transparent 2px) 0 0 / 5px 6px;
}
.close { position: absolute; right: 14px; top: 14px; width: 16px; height: 16px; }
.close::before, .close::after {
  content: "";
  position: absolute;
  left: 0;
  top: 7px;
  width: 16px;
  height: 1px;
  background: #888;
  transform: rotate(45deg);
}
.close::after { transform: rotate(-45deg); }
.tab { width: 102px; }
.tab.active { color: var(--blue); background: #fff; }

/* navigation */
.nav-panel { flex: none; width: 195px; display: flex; flex-direction: column; border-bottom: 0; }
.nav-body { position: relative; flex: 1; min-height: 0; overflow: hidden; }
.nav-list { width: 175px; }
.nav-list li { position: relative; height: 42px; overflow: hidden; white-space: nowrap; }
.nav-list a { display: flex; align-items: center; height: 100%; padding-left: 32px; }
.nav-list .cat { height: 63px; background: #f5f6f8; }
.cat a { gap: 21px; padding-left: 17px; }
.cat a svg { width: 36px; height: 36px; fill: none; }
.nav-list .current { color: var(--blue); }
.nav-list .cat.current { background: #e9ebf0; }
.trial {
  position: absolute;
  left: 98px;
  top: 7px;
  width: 80px;
  height: 28px;
  padding-left: 9px;
  border-radius: 14px 0 0 14px;
  background: linear-gradient(90deg, #f4d6a0, #ebba5c);
  color: #5b3a10;
  font: 500 16px/28px "Noto Sans CJK SC", sans-serif;
}
.lock { position: absolute; z-index: 1; left: 143px; top: 25px; width: 14px; height: 16px; fill: none; stroke: #555; stroke-width: 2; }
.lock.far { left: 159px; }
.dot { position: absolute; left: 163px; top: 6px; width: 9px; height: 9px; border-radius: 50%; background: #f00; }
.thumb { position: absolute; right: 6px; top: 374px; width: 6px; height: 389px; border-radius: 3px; background: #e4e4e6; }

/* component list */
.left-stack { flex: none; width: 420px; display: flex; flex-direction: column; gap: 6px; }
.list-panel { flex: 0 0 486px; }
.toolbar { display: flex; gap: 14px; padding: 10px 16px 11px; }
.toolbar button { display: grid; place-items: center; width: 47px; height: 39px; border-radius: 4px; background: #f4f4f5; }
.split { display: flex; gap: 1px; }
.toolbar .drop { width: 18px; }
.drop .caret { width: 7px; height: 5px; background: #999; }
.toolbar .more { width: 38px; margin-left: auto; border: 1px solid #dcdcdc; }
.more svg { width: 12px; height: 10px; fill: #445; }
.search { position: relative; display: block; margin: 0 15px 0 13px; }
.search input {
  display: block;
  width: 100%;
  height: 39px;
  padding: 0 40px 0 17px;
  border: 0;
  border-radius: 20px;
  background: #f4f4f4;
}
.search input::placeholder { color: #777; opacity: 1; }
.search svg { position: absolute; right: 18px; top: 12px; width: 16px; height: 16px; fill: none; stroke: #aaa; stroke-width: 2; }
.parts { display: grid; gap: 4px; padding: 16px 18px; }
.parts button { min-width: 107px; height: 32px; padding: 0 5px; border-radius: 4px; text-align: left; }
.parts .active { background: #c1d9f2; }

/* properties */
.prop-panel { flex: 1; min-height: 0; border-bottom: 0; overflow: hidden; }
.props { width: 100%; table-layout: fixed; border-collapse: collapse; }
.props th { height: 38px; padding: 2px 0 0; border: 1px solid var(--line); background: var(--head); font-weight: 400; }
.props th:first-child { width: 152px; border-left: 0; }
.props th:last-child { width: 62px; }
.props .strong { font-weight: 700; }
.props td { height: 38px; padding: 0 0 0 22px; }
.props tr:nth-child(even) td { height: 37px; }
.props td:nth-child(2) { padding: 0; }
.props td:last-child { padding: 0; text-align: center; }
.props .key { color: #1552f0; }
.props .fold td { position: relative; padding-left: 32px; border-bottom: 1px solid #fff; background: #ececec; text-align: left; }
.fold td::before {
  content: "";
  position: absolute;
  left: 15px;
  top: 13px;
  width: 5px;
  height: 8px;
  background: #888;
  clip-path: polygon(0 0, 100% 50%, 0 100%);
}
.fold.open td::before { left: 13px; top: 15px; width: 8px; height: 5px; clip-path: polygon(0 0, 100% 0, 50% 100%); }
.props input[type="text"] { display: block; width: 203px; height: 31px; padding: 0 4px; border: 1px solid #dadada; background: #fff; }
.props input:disabled { color: #888; }
.props input[type="checkbox"] { display: block; width: 12px; height: 12px; margin: 0 auto; appearance: none; border: 1px solid #b4b4b8; border-radius: 50%; background: #dedee2; }

/* drawing area */
.canvas { position: relative; flex: 1; min-width: 0; overflow: hidden; background: #000; }
.drawing { position: absolute; inset: 0; width: 100%; height: 100%; }
.axis-name { font: 24px "Liberation Sans", sans-serif; }
.handle { position: absolute; top: 555px; width: 24px; height: 93px; background: #4c4c4c; }
.handle svg { width: 10px; height: 16px; fill: none; stroke: #aaa; stroke-width: 1; }
.handle.left { left: 0; clip-path: polygon(0 0, 90% 6%, 100% 9%, 100% 91%, 90% 94%, 0 100%); }
.handle.right { right: 0; clip-path: polygon(100% 0, 10% 6%, 0 9%, 0 91%, 10% 94%, 100% 100%); }
.view-tools {
  position: absolute;
  top: 0;
  right: 0;
  width: 50px;
  height: 369px;
  padding: 12px 2px 0 0;
  display: flex;
  flex-direction: column;
  align-items: center;
  border: 1px solid #ccc;
  border-radius: 0 0 6px 6px;
  background: #fff;
}
.view-tools button { display: grid; flex: none; place-items: center; height: 44px; }
.view-tools .ic { width: 30px; height: 30px; }
.view-tools .caret { margin: 4px 0; width: 11px; background: #596274; }
.view-tools hr { width: 34px; margin: 3px 0; border: 0; border-top: 1px solid #555; }

/* display settings */
.display-panel { flex: none; width: 95px; overflow: hidden; border-right: 0; border-bottom: 0; }
.display-tabs { height: 43px; padding: 4px 0 0 4px; }
.sheet-tab { width: 92px; height: 37px; border: 1px solid #cdd1d6; border-bottom: 0; border-radius: 6px 6px 0 0; color: var(--blue); }
.tree-wrap { height: 1054px; margin-left: 4px; overflow: hidden; border: 2px solid #e0e0e2; border-right: 0; }
.tree { width: 180px; border-collapse: collapse; white-space: nowrap; }
.tree th { height: 30px; padding: 0 0 0 70px; text-align: left; font-weight: 400; }
.tree td {
  position: relative;
  height: 31px;
  padding: 0 0 0 60px;
  border-top: 1px solid #e0e0e0;
  background:
    linear-gradient(#dcdcdc, #dcdcdc) 11px 0 / 1px 100% no-repeat,
    linear-gradient(#dcdcdc, #dcdcdc) 26px 0 / 1px 100% no-repeat,
    linear-gradient(#dcdcdc, #dcdcdc) 26px 15px / 25px 1px no-repeat;
}
.tree tr:nth-child(even) td { height: 32px; }
.tree .end td { background-size: 1px 100%, 1px 15px, 25px 1px; }
.tree .branch td { padding-left: 45px; background-size: 1px 100%, 1px 100%, 1px 1px; background-position: 11px 0, 26px 16px, 26px 15px; }
.branch button { position: absolute; left: 17px; top: 6px; width: 19px; height: 19px; border: 1px solid #999; border-radius: 2px; background: #fff; }
.branch button::before { content: ""; position: absolute; left: 5px; top: 8px; width: 7px; height: 1px; background: #445; }
```
